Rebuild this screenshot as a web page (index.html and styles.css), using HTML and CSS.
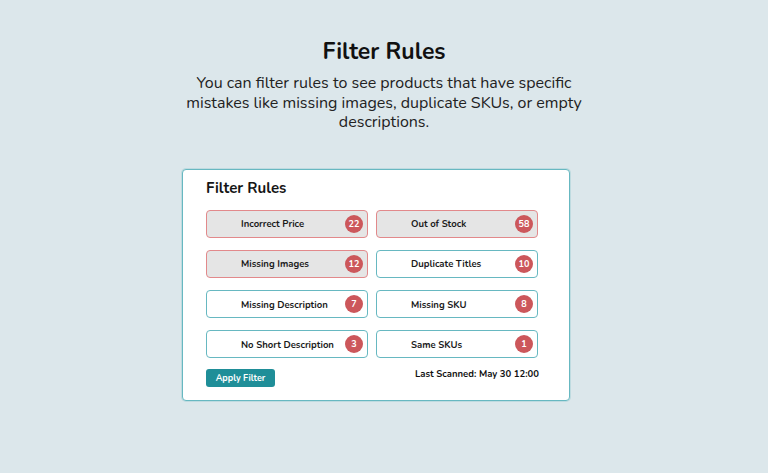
FILE: index.html
```html
<!DOCTYPE html>
<html lang="en">
<head>
<meta charset="utf-8">
<title>Filter Rules</title>
<link rel="stylesheet" href="styles.css">
</head>
<body>
<main class="page">
  <header class="intro">
    <h1 class="intro-title">Filter Rules</h1>
    <p class="intro-text">You can filter rules to see products that have specific mistakes like missing images, duplicate SKUs, or empty descriptions.</p>
  </header>
  <section class="card">
    <h2 class="card-title">Filter Rules</h2>
    <div class="rules">
      <button class="rule rule-active"><span class="rule-label">Incorrect Price</span><span class="badge">22</span></button>
      <button class="rule rule-active"><span class="rule-label">Out of Stock</span><span class="badge">58</span></button>
      <button class="rule rule-active"><span class="rule-label">Missing Images</span><span class="badge">12</span></button>
      <button class="rule"><span class="rule-label">Duplicate Titles</span><span class="badge">10</span></button>
      <button class="rule"><span class="rule-label">Missing Description</span><span class="badge">7</span></button>
      <button class="rule"><span class="rule-label">Missing SKU</span><span class="badge">8</span></button>
      <button class="rule"><span class="rule-label">No Short Description</span><span class="badge">3</span></button>
      <button class="rule"><span class="rule-label">Same SKUs</span><span class="badge">1</span></button>
    </div>
    <div class="card-footer">
      <button class="apply">Apply Filter</button>
      <span class="scanned">Last Scanned: May 30 12:00</span>
    </div>
  </section>
</main>
</body>
</html>
```
FILE: styles.css
```css
html, body {
  margin: 0;
  padding: 0;
}
body {
  background: #dce7eb;
  font-family: "Nunito", Lato, "Open Sans", sans-serif;
  color: #111;
  width: 768px;
  height: 473px;
  overflow: hidden;
}
.page {
  display: flex;
  flex-direction: column;
  align-items: center;
  padding-top: 38px;
}
.intro {
  text-align: center;
  width: 400px;
}
.intro-title {
  margin: 0;
  font-size: 23px;
  line-height: 28px;
  font-weight: 700;
}
.intro-text {
  margin: 8px 0 0;
  font-size: 16px;
  line-height: 19.5px;
  color: #222;
}
.card {
  margin-top: 36px;
  margin-right: 16px;
  width: 388px;
  height: 232px;
  box-sizing: border-box;
  background: #fff;
  border: 1px solid #67b8c1;
  border-radius: 4px;
  padding: 9px 0 0 23px;
  box-shadow: 0 0 0 1px rgba(103,184,193,0.25);
}
.card-title {
  margin: 0 0 13px;
  font-size: 15px;
  line-height: 18px;
  font-weight: 700;
  color: #151515;
}
.rules {
  display: grid;
  grid-template-columns: 162px 162px;
  column-gap: 8px;
  row-gap: 12.3px;
}
.rule {
  display: flex;
  align-items: center;
  justify-content: space-between;
  height: 28px;
  box-sizing: border-box;
  padding: 0 4px 0 34px;
  background: #fff;
  border: 1px solid #67b8c1;
  border-radius: 4px;
  font-family: inherit;
  font-size: 9.5px;
  font-weight: 700;
  color: #1a1a1a;
  cursor: pointer;
}
.rule-active {
  background: #e5e5e5;
  border-color: #e2898b;
}
.badge {
  display: flex;
  align-items: center;
  justify-content: center;
  width: 18px;
  height: 18px;
  border-radius: 50%;
  background: #cc575b;
  color: #fff;
  font-size: 9px;
  font-weight: 700;
}
.card-footer {
  display: flex;
  justify-content: space-between;
  align-items: flex-start;
  width: 333px;
  margin-top: 11px;
}
.apply {
  height: 18px;
  width: 69px;
  padding: 0;
  border: none;
  border-radius: 3px;
  background: #1f8e98;
  color: #fff;
  font-family: inherit;
  font-size: 9px;
  font-weight: 700;
}
.scanned {
  font-size: 9.5px;
  font-weight: 700;
  line-height: 12px;
  margin-top: -1px;
}
```
